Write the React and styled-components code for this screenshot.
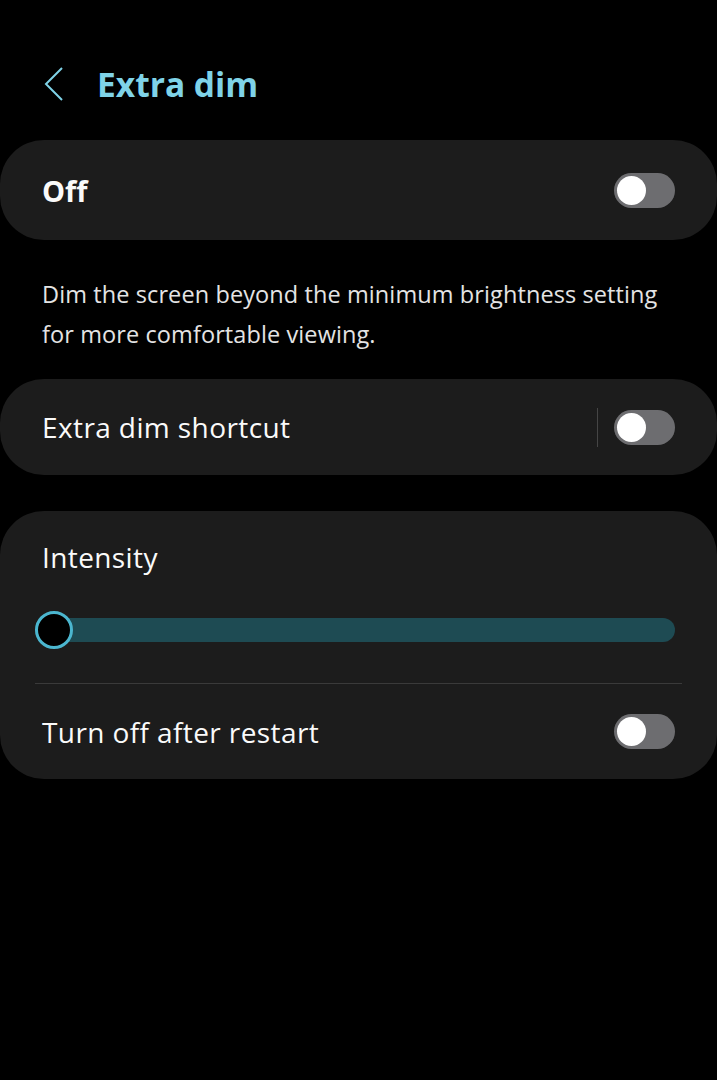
import React, { useState } from "react";
import styled, { createGlobalStyle } from "styled-components";

const Global = createGlobalStyle`
  html, body {
    margin: 0;
    padding: 0;
    background: #000;
  }
  body {
    font-family: "Open Sans", Roboto, sans-serif;
    color: #fafafa;
  }
`;

const Page = styled.div`
  width: 717px;
  min-height: 1080px;
  background: #000;
`;

const Header = styled.div`
  display: flex;
  align-items: center;
  height: 140px;
  padding: 28px 0 0 44px;
  box-sizing: border-box;
  gap: 33px;
`;

const Back = styled.button`
  display: flex;
  background: none;
  border: 0;
  padding: 0;
  cursor: pointer;
`;

const Title = styled.h1`
  margin: 0;
  font-size: 33.5px;
  font-weight: 700;
  color: #7fd3e8;
`;

const Card = styled.div`
  background: #1c1c1c;
  border-radius: 44px;
  overflow: hidden;
`;

const Row = styled.div`
  display: flex;
  align-items: center;
  justify-content: space-between;
  height: ${(p) => p.h || 96}px;
  padding: 0 42px;
  box-sizing: border-box;
`;

const Label = styled.span`
  font-size: ${(p) => (p.bold ? 29 : 28)}px;
  font-weight: ${(p) => (p.bold ? 700 : 400)};
  letter-spacing: ${(p) => (p.bold ? 0 : 0.4)}px;
  color: #fafafa;
`;

const Right = styled.div`
  display: flex;
  align-items: center;
  gap: 16px;
`;

const VLine = styled.div`
  width: 1px;
  height: 39px;
  background: #454545;
`;

const Track = styled.button`
  position: relative;
  width: 61px;
  height: 35px;
  border-radius: 18px;
  border: 0;
  padding: 0;
  background: ${(p) => (p.on ? "#3fa9c2" : "#6d6d70")};
  cursor: pointer;
`;

const Knob = styled.span`
  position: absolute;
  top: 3px;
  left: ${(p) => (p.on ? 29 : 3)}px;
  width: 29px;
  height: 29px;
  border-radius: 50%;
  background: #fff;
`;

const Desc = styled.p`
  margin: 0;
  padding: 34px 42px 25px;
  font-size: 23.5px;
  letter-spacing: 0.1px;
  line-height: 40px;
  color: #e4e4e4;
  white-space: nowrap;
`;

const Gap = styled.div`
  height: ${(p) => p.h}px;
`;

const SectionTitle = styled.div`
  padding: 30px 42px 0;
  font-size: 28px;
  letter-spacing: 0.4px;
  line-height: 32px;
  color: #fafafa;
`;

const Slider = styled.div`
  position: relative;
  margin: 38px 42px 0 35px;
  height: 38px;
  display: flex;
  align-items: center;
`;

const SliderTrack = styled.div`
  width: 100%;
  height: 24px;
  border-radius: 12px;
  background: #1e4b53;
`;

const SliderThumb = styled.div`
  position: absolute;
  left: 0;
  top: 0;
  width: 32px;
  height: 32px;
  border-radius: 50%;
  border: 3px solid #4bb6cf;
  background: #000;
`;

const Divider = styled.div`
  margin: 34px 35px 0;
  height: 1px;
  background: #3a3a3a;
`;

const Toggle = ({ on, onClick }) => (
  <Track on={on ? 1 : 0} onClick={onClick}>
    <Knob on={on ? 1 : 0} />
  </Track>
);

export default function App() {
  const [main, setMain] = useState(false);
  const [shortcut, setShortcut] = useState(false);
  const [restart, setRestart] = useState(false);

  return (
    <Page>
      <Global />
      <Header>
        <Back>
          <svg width="20" height="34" viewBox="0 0 20 34" fill="none">
            <path d="M18 1 L2 17 L18 33" stroke="#7fd3e8" strokeWidth="2" />
          </svg>
        </Back>
        <Title>Extra dim</Title>
      </Header>

      <Card>
        <Row h={100}>
          <Label bold>{main ? "On" : "Off"}</Label>
          <Toggle on={main} onClick={() => setMain(!main)} />
        </Row>
      </Card>

      <Desc>
        Dim the screen beyond the minimum brightness setting
        <br />
        for more comfortable viewing.
      </Desc>

      <Card>
        <Row h={96}>
          <Label>Extra dim shortcut</Label>
          <Right>
            <VLine />
            <Toggle on={shortcut} onClick={() => setShortcut(!shortcut)} />
          </Right>
        </Row>
      </Card>

      <Gap h={36} />

      <Card>
        <SectionTitle>Intensity</SectionTitle>
        <Slider>
          <SliderTrack />
          <SliderThumb />
        </Slider>
        <Divider />
        <Row h={95}>
          <Label>Turn off after restart</Label>
          <Toggle on={restart} onClick={() => setRestart(!restart)} />
        </Row>
      </Card>
    </Page>
  );
}
